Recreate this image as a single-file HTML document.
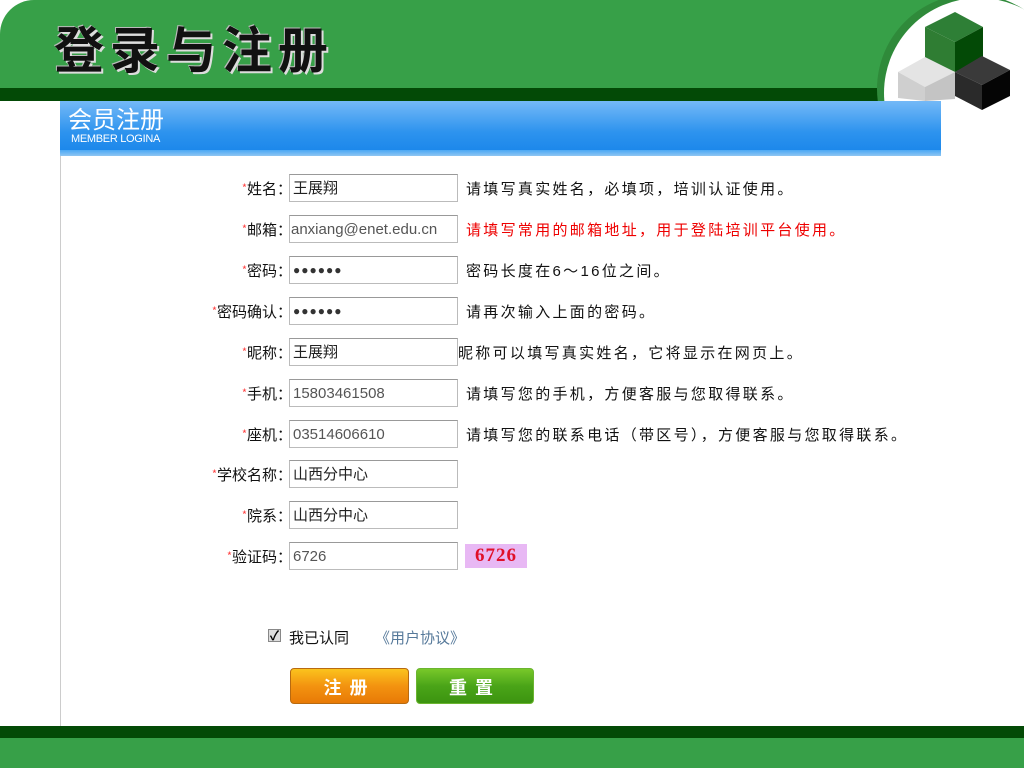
<!DOCTYPE html>
<html><head><meta charset="utf-8"><style>
*{margin:0;padding:0;box-sizing:border-box}
body{width:1024px;height:768px;position:relative;overflow:hidden;background:#fff;font-family:"Liberation Sans","Noto Sans CJK SC","WenQuanYi Zen Hei",sans-serif}
.hdr{position:absolute;left:0;top:0;width:1000px;height:90px;background:#37a048;border-top-left-radius:34px}
.dark{position:absolute;left:0;top:88px;width:900px;height:13px;background:#034a06}
.cwrap{position:absolute;left:0;top:0;width:1024px;height:101px;overflow:hidden}
.circ{position:absolute;left:877px;top:-6px;width:190px;height:190px;border-radius:50%;background:#2f8a3a}
.circ2{position:absolute;left:884px;top:-2px;width:190px;height:190px;border-radius:50%;background:#fff}
.title{position:absolute;left:54px;top:17px;font-size:50px;line-height:1.2;font-weight:bold;color:#111;letter-spacing:6px;text-shadow:2px 2px 0 #ddd,-1px -1px 0 #bbb;font-family:"Noto Sans CJK SC",sans-serif}
.banner{position:absolute;left:60px;top:101px;width:881px;height:52px;background:linear-gradient(#74b9f7,#2d93ee 60%,#1a86ea)}
.banner2{position:absolute;left:60px;top:150px;width:881px;height:6px;background:linear-gradient(#4aa8f5,#8fc5f2)}
.bt1{position:absolute;left:68px;top:106px;color:#fff;font-size:24px;line-height:1;font-family:"Noto Sans CJK SC",sans-serif}
.bt2{position:absolute;left:71px;top:134px;color:#fff;font-size:11px;line-height:1;letter-spacing:-.3px}
.lline{position:absolute;left:60px;top:156px;width:1px;height:570px;background:#ccc}
.f1{position:absolute;left:0;top:726px;width:1024px;height:12px;background:#034a06}
.f2{position:absolute;left:0;top:738px;width:1024px;height:30px;background:#37a048}
.row{position:absolute;left:0;width:1024px;height:28px;font-size:15px;color:#111}
.lab{position:absolute;right:732px;top:4px;white-space:nowrap;font-family:"Noto Sans CJK SC",sans-serif;line-height:20px}
.lab b{color:#f44;font-weight:normal;font-size:11px;vertical-align:2px}
.inp{position:absolute;left:289px;top:0;width:169px;height:28px;border:1px solid #bbb;border-top-color:#999;background:#fff;font-size:15px;color:#555;padding:0 3px;line-height:27px;white-space:nowrap;overflow:hidden}
.hint{position:absolute;left:466px;top:4px;letter-spacing:2.3px;white-space:nowrap}
.dots{font-size:12px;letter-spacing:1px;color:#333}
.btn{position:absolute;top:668px;height:36px;border-radius:4px;color:#fff;font-weight:bold;font-size:18px;text-align:center;line-height:36px;letter-spacing:8px;font-family:"Noto Sans CJK SC",sans-serif}
</style></head><body>
<div class="hdr"></div>
<div class="dark"></div>
<div class="cwrap"><div class="circ"></div><div class="circ2"></div></div>
<svg style="position:absolute;left:0;top:0" width="1024" height="130">
<polygon points="955,12 983,27 955,42 925,27" fill="#2e7f36"/>
<polygon points="925,27 955,42 955,72 925,58" fill="#2f7d33"/>
<polygon points="955,42 983,27 983,58 955,72" fill="#034a06"/>
<polygon points="925,57 955,72 925,87 898,72" fill="#e4e4e4"/>
<polygon points="898,72 925,87 925,101 898,98" fill="#cfcfcf"/>
<polygon points="925,87 955,72 955,99 925,101" fill="#c4c4c4"/>
<polygon points="982,56 1010,70 982,85 955,72" fill="#3a3a3a"/>
<polygon points="955,72 982,85 982,110 955,96" fill="#2a2a2a"/>
<polygon points="982,85 1010,70 1010,96 982,110" fill="#050505"/>
</svg>
<div class="title">登录与注册</div>
<div class="banner"></div><div class="banner2"></div>
<div class="bt1">会员注册</div><div class="bt2">MEMBER LOGINA</div>
<div class="lline"></div>

<div class="row" style="top:174px"><span class="lab"><b>*</b>姓名：</span><div class="inp" style="color:#222">王展翔</div><span class="hint">请填写真实姓名，必填项，培训认证使用。</span></div>
<div class="row" style="top:215px"><span class="lab"><b>*</b>邮箱：</span><div class="inp" style="padding-left:1px">anxiang@enet.edu.cn</div><span class="hint" style="color:#e00">请填写常用的邮箱地址，用于登陆培训平台使用。</span></div>
<div class="row" style="top:256px"><span class="lab"><b>*</b>密码：</span><div class="inp dots">●●●●●●</div><span class="hint">密码长度在6～16位之间。</span></div>
<div class="row" style="top:297px"><span class="lab"><b>*</b>密码确认：</span><div class="inp dots">●●●●●●</div><span class="hint">请再次输入上面的密码。</span></div>
<div class="row" style="top:338px"><span class="lab"><b>*</b>昵称：</span><div class="inp" style="color:#222">王展翔</div><span class="hint" style="left:458px">昵称可以填写真实姓名，它将显示在网页上。</span></div>
<div class="row" style="top:379px"><span class="lab"><b>*</b>手机：</span><div class="inp">15803461508</div><span class="hint">请填写您的手机，方便客服与您取得联系。</span></div>
<div class="row" style="top:420px"><span class="lab"><b>*</b>座机：</span><div class="inp">03514606610</div><span class="hint">请填写您的联系电话（带区号），方便客服与您取得联系。</span></div>
<div class="row" style="top:460px"><span class="lab"><b>*</b>学校名称：</span><div class="inp" style="color:#222">山西分中心</div></div>
<div class="row" style="top:501px"><span class="lab"><b>*</b>院系：</span><div class="inp" style="color:#222">山西分中心</div></div>
<div class="row" style="top:542px"><span class="lab"><b>*</b>验证码：</span><div class="inp">6726</div>
<div style="position:absolute;left:465px;top:2px;width:62px;height:24px;background:#e8b8f4;color:#e0102a;font-weight:bold;font-family:'Liberation Serif',serif;font-size:19px;text-align:center;line-height:24px;letter-spacing:1px">6726</div></div>

<div style="position:absolute;left:268px;top:629px;width:13px;height:13px;border:1px solid #888;background:#ddd;font-size:13px;line-height:11px;text-align:center;color:#000;font-weight:bold">✓</div>
<div style="position:absolute;left:289px;top:627px;font-size:15px;color:#111">我已认同</div>
<div style="position:absolute;left:375px;top:627px;font-size:15px;color:#56799a">《用户协议》</div>
<div class="btn" style="left:290px;width:119px;background:linear-gradient(#fbc31d,#f39310 50%,#e87a06);border:1px solid #b86a10">注册</div>
<div class="btn" style="left:416px;width:118px;background:linear-gradient(#78c82a,#4aa418 50%,#3c9410);border:1px solid #6bb530">重置</div>

<div class="f1"></div><div class="f2"></div>
</body></html>
